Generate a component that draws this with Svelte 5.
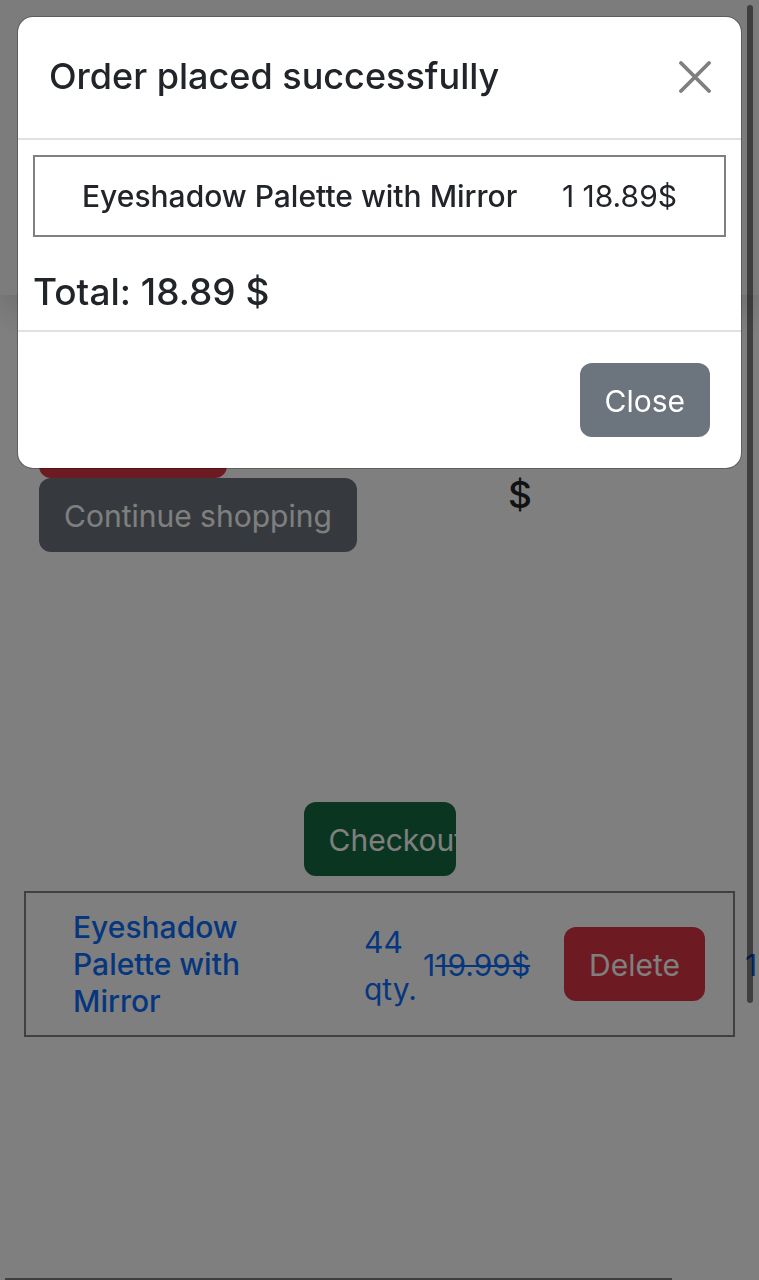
<script>
  const product = { name: 'Eyeshadow Palette with Mirror', stock: 44, count: 1, oldPrice: 19.99, price: 18.89 };
  let open = $state(true);
  const close = () => (open = false);
</script>

<div class="page">
  <header class="top"></header>
  <main>
    <section class="summary">
      <div class="actions">
        <button class="btn danger clear" aria-label="Clear cart"></button>
        <button class="btn secondary">Continue shopping</button>
      </div>
      <p class="sum">$</p>
    </section>
    <button class="btn success checkout">Checkout</button>
    <article class="item">
      <a class="name" href="#product">{product.name}</a>
      <a class="qty" href="#product">{product.stock} qty.</a>
      <a class="price" href="#product">{product.count}<s>{product.oldPrice}$</s></a>
      <button class="btn danger">Delete</button>
      <a class="extra" href="#product">{product.count}</a>
    </article>
  </main>
</div>

{#if open}
  <div class="backdrop"></div>
  <div class="overlay">
    <div class="modal" role="dialog" aria-modal="true" aria-labelledby="title">
      <div class="head">
        <h1 id="title">Order placed successfully</h1>
        <button class="x" aria-label="Close dialog" onclick={close}>
          <svg viewBox="0 0 32 32" width="32" height="32" aria-hidden="true">
            <path d="M2 2 30 30M30 2 2 30" fill="none" stroke="#7f7f7f" stroke-width="3.8" stroke-linecap="round" />
          </svg>
        </button>
      </div>
      <div class="body">
        <div class="line">
          <span class="line-name">{product.name}</span>
          <span>{product.count} {product.price}$</span>
        </div>
        <h2>Total: {product.price} $</h2>
      </div>
      <div class="foot">
        <button class="btn secondary" onclick={close}>Close</button>
      </div>
    </div>
  </div>
{/if}
<div class="bar vertical"></div>
<div class="bar horizontal"></div>

<style>
  :global(body) {
    font-family: Inter, "Liberation Sans", sans-serif;
    font-size: 30px;
    line-height: 47px;
    color: #212529;
    background: #fff;
  }
  * { box-sizing: border-box; }
  h1, h2, p { margin: 0; font-weight: 500; }
  .page {
    min-height: 100vh;
    overflow: hidden;
  }
  .top {
    height: 295px;
    background: #f8f9fa;
    box-shadow: 0 16px 32px rgba(0, 0, 0, 0.15);
  }
  main {
    display: flex;
    flex-direction: column;
    padding: 109px 24px 0;
  }
  .btn {
    height: 74px;
    padding: 2px 25px 0;
    border: 0;
    border-radius: 12px;
    font: inherit;
    color: #fff;
    white-space: nowrap;
  }
  .danger { background: #dc3545; }
  .secondary { background: #6c757d; }
  .success { background: #146c43; }
  .summary {
    display: grid;
    grid-template-columns: 484px 1fr;
    align-items: start;
    min-height: 398px;
  }
  .actions {
    display: flex;
    flex-direction: column;
    align-items: flex-start;
    padding-left: 15px;
  }
  .clear { width: 188px; }
  .sum {
    padding-top: 67px;
    font-size: 37px;
  }
  .checkout {
    align-self: center;
    width: 152px;
    overflow: hidden;
    text-align: left;
  }
  .item {
    display: flex;
    align-items: center;
    height: 146px;
    margin-top: 15px;
    padding-left: 47px;
    border: 2px solid #808080;
  }
  .item a {
    color: #0d6efd;
    text-decoration: none;
    flex: none;
  }
  .item .btn { flex: none; }
  .name {
    width: 190px;
    margin-right: 101px;
    line-height: 37px;
    font-weight: 500;
  }
  .qty, .price, .extra { padding-top: 3px; }
  .qty { width: 59px; }
  .price { width: 141px; }
  s { text-decoration-thickness: 2px; }
  .extra { margin-left: 40px; }
  .backdrop {
    position: fixed;
    inset: 0;
    background: rgba(0, 0, 0, 0.5);
  }
  .overlay {
    position: fixed;
    inset: 0;
    padding: 16px 17px;
  }
  .modal {
    overflow: hidden;
    background: #fff;
    background-clip: padding-box;
    border: 1px solid rgba(0, 0, 0, 0.25);
    border-radius: 16px;
  }
  .head {
    display: flex;
    align-items: center;
    justify-content: space-between;
    height: 123px;
    padding: 0 30px 2px 31px;
    border-bottom: 2px solid #dee2e6;
  }
  h1 { font-size: 36px; }
  h2 { font-size: 37px; }
  .x {
    display: flex;
    padding: 0;
    border: 0;
    background: none;
  }
  .body { padding: 15px; }
  .line {
    display: flex;
    justify-content: space-between;
    padding: 16px 47px 15px;
    border: 2px solid #808080;
    white-space: nowrap;
  }
  .line-name { font-weight: 500; }
  h2 { padding-top: 31px; }
  .foot {
    display: flex;
    justify-content: flex-end;
    padding: 31px;
    border-top: 2px solid #dee2e6;
  }
  .bar {
    position: fixed;
    background: rgba(0, 0, 0, 0.5);
  }
  .vertical {
    top: 5px;
    right: 6px;
    bottom: 277px;
    width: 6px;
    border-radius: 3px;
  }
  .horizontal {
    left: 5px;
    right: 87px;
    bottom: 0;
    height: 2px;
  }
</style>
